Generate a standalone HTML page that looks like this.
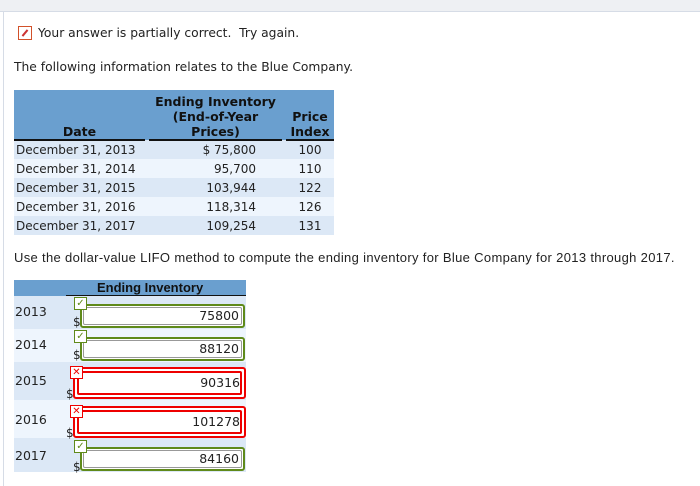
<!DOCTYPE html>
<html><head><meta charset="utf-8"><style>
*{margin:0;padding:0;box-sizing:border-box}
body{width:700px;height:486px;background:#fff;position:relative;overflow:hidden;font-family:"DejaVu Sans","Liberation Sans",sans-serif;font-size:12px;color:#222}
.a{position:absolute;white-space:nowrap}
.top{left:0;top:0;width:700px;height:12px;background:#eef0f3;border-bottom:1px solid #d6dce6}
.lb{left:3px;top:12px;width:1px;height:474px;background:#d6dce6}
table{border-collapse:collapse}
td{padding:0}
.c{text-align:center}.r{text-align:right}
.hd{background:#6a9fcf;font-weight:bold;color:#111}
.row1{background:#dce8f6}.row2{background:#eef5fd}
.ok{position:absolute;border:2px solid #5f8a1a;border-radius:3px;background:#fff;text-align:right;padding-right:4px;font-size:12.5px}
.ok::after{content:"";position:absolute;left:1px;top:1px;right:1px;bottom:1px;border:1px solid #999;border-radius:2px}
.bad{position:absolute;border:2px solid #e00;border-radius:3px;background:#fff;text-align:right;padding-right:4px;font-size:12.5px}
.bad .in{position:absolute;left:2px;top:2px;right:2px;bottom:2px;border:2px solid #e00;border-radius:2px}
.ic{position:absolute;width:13px;height:13px;background:#fff;font-size:10px;line-height:11px;text-align:center;font-weight:bold}
.g{border:1px solid #5f8a1a;color:#5f8a1a}
.x{border:1px solid #e00;color:#e00}
.d{position:absolute;font-size:12px}
</style></head><body>
<div class="a top"></div><div class="a lb"></div>
<div class="a" style="left:18px;top:26px;width:14px;height:14px;border:1px solid #d2512a"><div style="position:absolute;left:5px;top:2px;width:2px;height:8px;background:#c33;transform:rotate(40deg)"></div></div>
<div class="a" style="left:38px;top:26px;font-size:12.3px">Your answer is partially correct.&nbsp; Try again.</div>
<div class="a" style="left:14px;top:60px;font-size:12.3px">The following information relates to the Blue Company.</div>
<table class="a" style="left:14px;top:90px;width:320px">
<tr class="hd" style="height:50px;font-size:12.5px"><td style="width:131px;vertical-align:bottom;text-align:center;border-bottom:2px solid #111">Date</td><td style="width:4px"></td><td style="width:133px;vertical-align:bottom;text-align:center;line-height:15px;border-bottom:2px solid #111">Ending Inventory<br>(End-of-Year<br>Prices)</td><td style="width:4px"></td><td style="vertical-align:bottom;text-align:center;line-height:15px;border-bottom:2px solid #111">Price<br>Index</td></tr>
<tr class="row1" style="height:19px"><td style="padding-left:2px">December 31, 2013</td><td></td><td class="r" style="padding-right:26px">$ 75,800</td><td></td><td class="c">100</td></tr>
<tr class="row2" style="height:19px"><td style="padding-left:2px">December 31, 2014</td><td></td><td class="r" style="padding-right:26px">95,700</td><td></td><td class="c">110</td></tr>
<tr class="row1" style="height:19px"><td style="padding-left:2px">December 31, 2015</td><td></td><td class="r" style="padding-right:26px">103,944</td><td></td><td class="c">122</td></tr>
<tr class="row2" style="height:19px"><td style="padding-left:2px">December 31, 2016</td><td></td><td class="r" style="padding-right:26px">118,314</td><td></td><td class="c">126</td></tr>
<tr class="row1" style="height:19px"><td style="padding-left:2px">December 31, 2017</td><td></td><td class="r" style="padding-right:26px">109,254</td><td></td><td class="c">131</td></tr>
</table>
<div class="a" style="left:14px;top:250px;font-family:'Liberation Sans',sans-serif;font-size:13px;letter-spacing:0.33px">Use the dollar-value LIFO method to compute the ending inventory for Blue Company for 2013 through 2017.</div>
<div class="a hd" style="left:14px;top:280px;width:232px;height:16px"></div>
<div class="a" style="left:66px;top:295px;width:180px;height:1px;background:#111"></div>
<div class="a" style="left:97px;top:280px;font-family:'Liberation Sans',sans-serif;font-weight:bold;font-size:13px;color:#111">Ending Inventory</div>
<div class="a row1" style="left:14px;top:296px;width:232px;height:33px"></div>
<div class="a row2" style="left:14px;top:329px;width:232px;height:33px"></div>
<div class="a row1" style="left:14px;top:362px;width:232px;height:38px"></div>
<div class="a row2" style="left:14px;top:400px;width:232px;height:38px"></div>
<div class="a row1" style="left:14px;top:438px;width:232px;height:34px"></div>
<div class="a" style="left:15px;top:304px;font-size:12.5px">2013</div>
<div class="a" style="left:15px;top:337px;font-size:12.5px">2014</div>
<div class="a" style="left:15px;top:373px;font-size:12.5px">2015</div>
<div class="a" style="left:15px;top:412px;font-size:12.5px">2016</div>
<div class="a" style="left:15px;top:448px;font-size:12.5px">2017</div>
<div class="d" style="left:73px;top:315px">$</div>
<div class="d" style="left:73px;top:348px">$</div>
<div class="d" style="left:66px;top:387px">$</div>
<div class="d" style="left:66px;top:426px">$</div>
<div class="d" style="left:73px;top:460px">$</div>
<div class="ok" style="left:80px;top:304px;width:165px;height:24px;line-height:20px">75800</div>
<div class="ok" style="left:80px;top:337px;width:165px;height:24px;line-height:20px">88120</div>
<div class="bad" style="left:73px;top:367px;width:173px;height:32px;line-height:28px"><div class="in"></div><span style="position:relative">90316</span></div>
<div class="bad" style="left:73px;top:406px;width:173px;height:32px;line-height:28px"><div class="in"></div><span style="position:relative">101278</span></div>
<div class="ok" style="left:80px;top:447px;width:165px;height:24px;line-height:20px">84160</div>
<div class="ic g" style="left:74px;top:297px">✓</div>
<div class="ic g" style="left:74px;top:330px">✓</div>
<div class="ic x" style="left:70px;top:366px">✕</div>
<div class="ic x" style="left:70px;top:405px">✕</div>
<div class="ic g" style="left:74px;top:440px">✓</div>
</body></html>
